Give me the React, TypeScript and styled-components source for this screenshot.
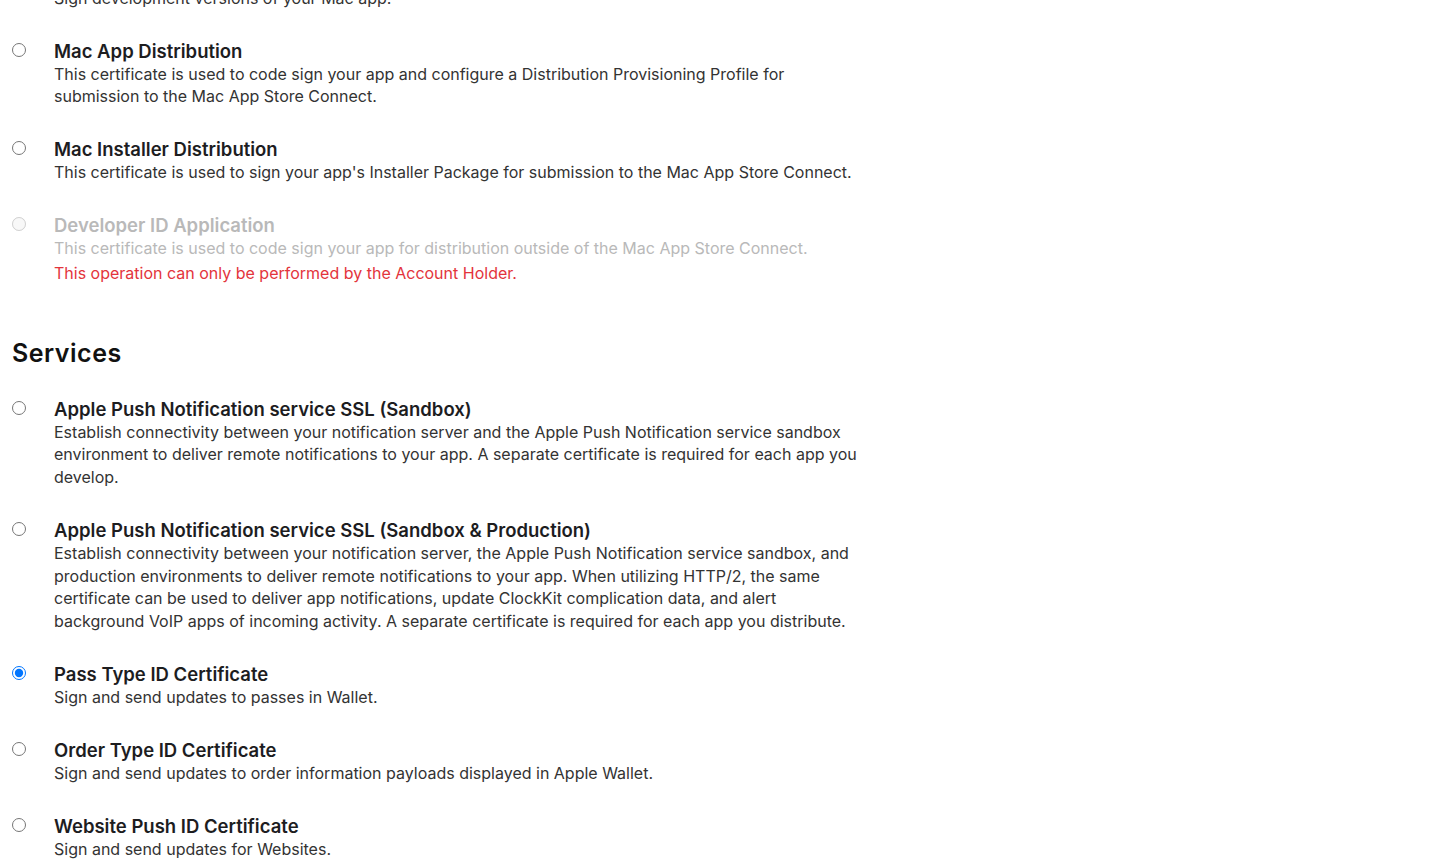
import React from "react";
import styled, { createGlobalStyle } from "styled-components";

const GlobalStyle = createGlobalStyle`
  html, body {
    margin: 0;
    padding: 0;
    background: #ffffff;
    overflow: hidden;
  }
  body {
    font-family: Inter, "Noto Sans", "Liberation Sans", sans-serif;
    color: #1d1d1f;
    -webkit-font-smoothing: antialiased;
  }
`;

const Page = styled.div`
  display: flex;
  flex-direction: column;
  gap: 54px;
  padding: 0 12px;
  margin-top: -36.5px;
`;

const Section = styled.section`
  display: flex;
  flex-direction: column;
  gap: 30px;
`;

const Heading = styled.h2`
  margin: 0;
  font-size: 25px;
  line-height: 29px;
  font-weight: 600;
  color: #111111;
  letter-spacing: 0.5px;
`;

const OptionList = styled.div`
  display: flex;
  flex-direction: column;
  gap: 30.33px;
`;

const Option = styled.label<{ $disabled?: boolean }>`
  display: flex;
  align-items: flex-start;
  gap: 28px;
  cursor: ${(p) => (p.$disabled ? "default" : "pointer")};
`;

const Radio = styled.input.attrs({ type: "radio" })`
  flex: none;
  width: 14px;
  height: 14px;
  margin: 3px 0 0 0;
`;

const Body = styled.div`
  display: flex;
  flex-direction: column;
  max-width: 810px;
`;

const Title = styled.div<{ $disabled?: boolean }>`
  font-size: 18.5px;
  line-height: 23px;
  font-weight: 600;
  color: ${(p) => (p.$disabled ? "#b9b9b9" : "#1d1d1f")};
`;

const Description = styled.div<{ $disabled?: boolean }>`
  font-size: 16px;
  line-height: 22.67px;
  color: ${(p) => (p.$disabled ? "#b9b9b9" : "#333333")};
`;

const Notice = styled.div`
  margin-top: 2px;
  font-size: 16px;
  line-height: 22.67px;
  color: #e3343c;
`;

type Cert = {
  id: string;
  title: string;
  description: string;
  disabled?: boolean;
  notice?: string;
};

const software: Cert[] = [
  {
    id: "mac-dev",
    title: "Mac Development",
    description: "Sign development versions of your Mac app.",
  },
  {
    id: "mac-app-dist",
    title: "Mac App Distribution",
    description:
      "This certificate is used to code sign your app and configure a Distribution Provisioning Profile for submission to the Mac App Store Connect.",
  },
  {
    id: "mac-installer",
    title: "Mac Installer Distribution",
    description:
      "This certificate is used to sign your app's Installer Package for submission to the Mac App Store Connect.",
  },
  {
    id: "dev-id-app",
    title: "Developer ID Application",
    description:
      "This certificate is used to code sign your app for distribution outside of the Mac App Store Connect.",
    disabled: true,
    notice: "This operation can only be performed by the Account Holder.",
  },
];

const services: Cert[] = [
  {
    id: "apns-sandbox",
    title: "Apple Push Notification service SSL (Sandbox)",
    description:
      "Establish connectivity between your notification server and the Apple Push Notification service sandbox environment to deliver remote notifications to your app. A separate certificate is required for each app you develop.",
  },
  {
    id: "apns-prod",
    title: "Apple Push Notification service SSL (Sandbox & Production)",
    description:
      "Establish connectivity between your notification server, the Apple Push Notification service sandbox, and production environments to deliver remote notifications to your app. When utilizing HTTP/2, the same certificate can be used to deliver app notifications, update ClockKit complication data, and alert background VoIP apps of incoming activity. A separate certificate is required for each app you distribute.",
  },
  {
    id: "pass-type",
    title: "Pass Type ID Certificate",
    description: "Sign and send updates to passes in Wallet.",
  },
  {
    id: "order-type",
    title: "Order Type ID Certificate",
    description:
      "Sign and send updates to order information payloads displayed in Apple Wallet.",
  },
  {
    id: "website-push",
    title: "Website Push ID Certificate",
    description: "Sign and send updates for Websites.",
  },
];

const CertOption = ({
  cert,
  selected,
  onSelect,
}: {
  cert: Cert;
  selected: string;
  onSelect: (id: string) => void;
}) => (
  <Option $disabled={cert.disabled}>
    <Radio
      name="certificate"
      value={cert.id}
      disabled={cert.disabled}
      checked={selected === cert.id}
      onChange={() => onSelect(cert.id)}
    />
    <Body>
      <Title $disabled={cert.disabled}>{cert.title}</Title>
      <Description $disabled={cert.disabled}>{cert.description}</Description>
      {cert.notice && <Notice>{cert.notice}</Notice>}
    </Body>
  </Option>
);

export default function App() {
  const [selected, setSelected] = React.useState("pass-type");

  return (
    <>
      <GlobalStyle />
      <Page>
        <Section>
          <OptionList>
            {software.map((c) => (
              <CertOption key={c.id} cert={c} selected={selected} onSelect={setSelected} />
            ))}
          </OptionList>
        </Section>
        <Section>
          <Heading>Services</Heading>
          <OptionList>
            {services.map((c) => (
              <CertOption key={c.id} cert={c} selected={selected} onSelect={setSelected} />
            ))}
          </OptionList>
        </Section>
      </Page>
    </>
  );
}
